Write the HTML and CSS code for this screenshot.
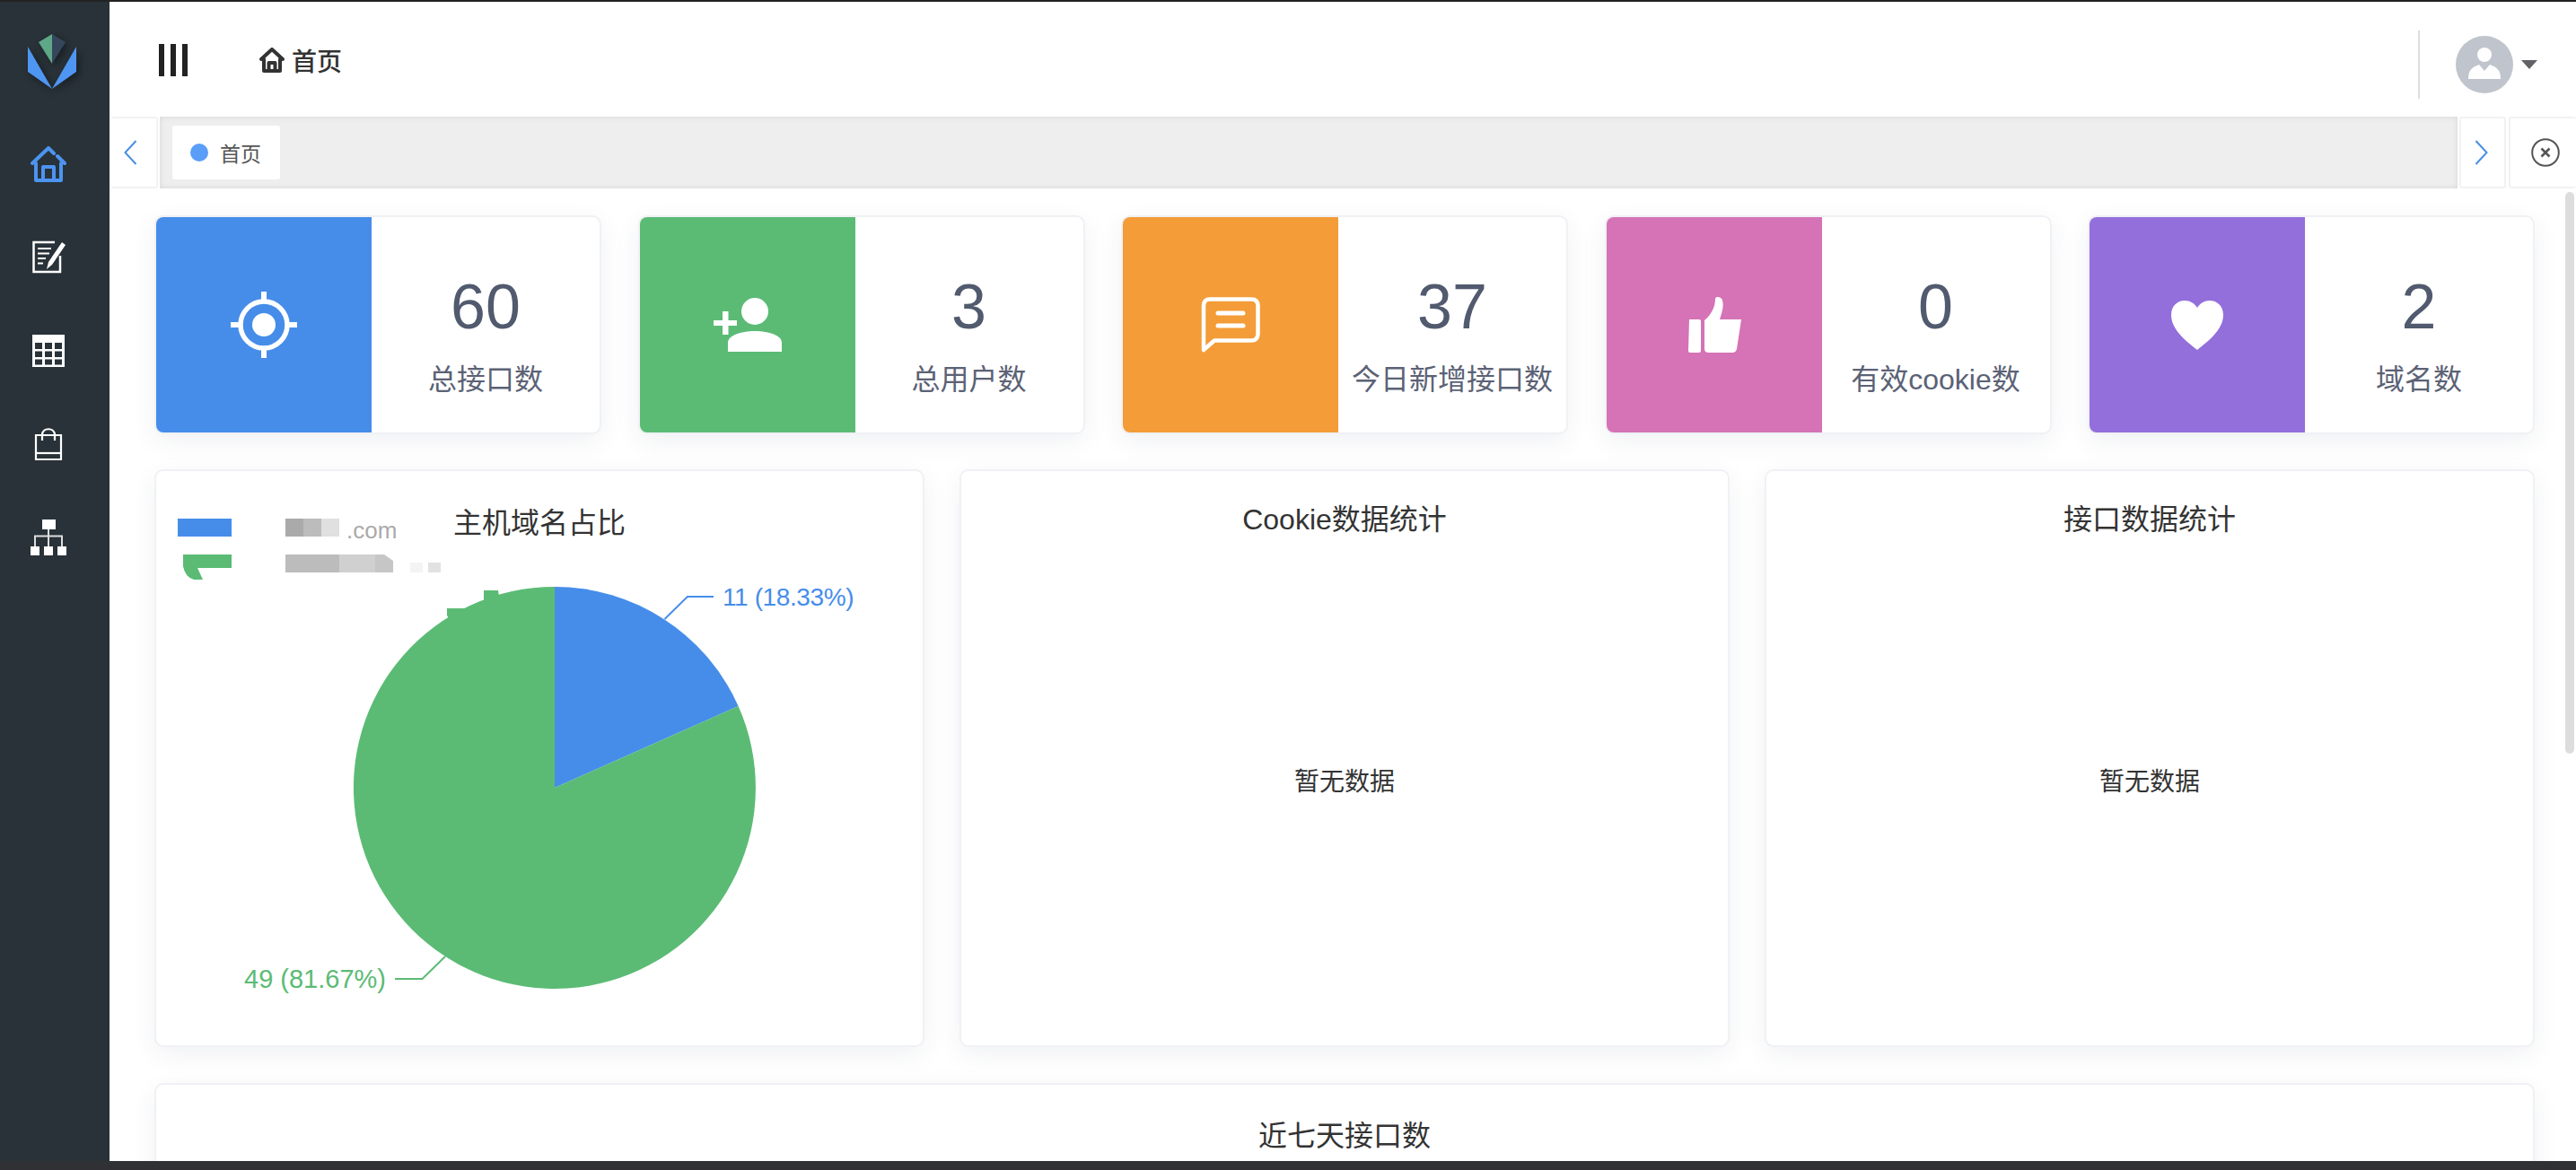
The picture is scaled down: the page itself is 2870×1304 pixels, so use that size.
FILE: index.html
```html
<!DOCTYPE html>
<html lang="zh-CN">
<head>
    <meta charset="UTF-8">
    <title>首页</title>
    <link rel="stylesheet" href="styles.css">
</head>
<body>
    <div class="app">
        <aside class="sidebar">
            <div class="logo">
                <svg width="54" height="62" viewBox="0 0 54 62">
                    <path d="M0 14 L27 61 L0 42 Z" fill="#4f96f2"/>
                    <path d="M54 14 L27 61 L54 42 Z" fill="#4f96f2"/>
                    <path d="M12 9 L27 0 L27 33 Z" fill="#5ea888"/>
                    <path d="M42 9 L27 0 L27 33 Z" fill="#35465c"/>
                </svg>
            </div>
            <nav class="menu">
                <div class="menu-item active">
                    <svg width="40" height="40" viewBox="0 0 40 40" fill="none" stroke="#4d94f0" stroke-width="4" stroke-linejoin="round" stroke-linecap="round">
                        <path d="M2 19 L20 2 L26 8 M30 11 L38 19"/>
                        <path d="M6 19 V38 H34 V19"/>
                        <path d="M14 38 V23 H26 V38"/>
                    </svg>
                </div>
                <div class="menu-item">
                    <svg width="40" height="40" viewBox="0 0 40 40" fill="none" stroke="#fff">
                        <path d="M27 3 H3.500 V36 H33 V18" stroke-width="2.500"/>
                        <path d="M8 10 H23 M8 15.500 H21 M8 21 H17 M8 26.500 H14" stroke-width="2.200"/>
                        <path d="M35 3 L39 6 L24 28 L18 33 L20 25 Z" fill="#fff" stroke="none"/>
                    </svg>
                </div>
                <div class="menu-item">
                    <svg width="40" height="40" viewBox="0 0 40 40" fill="none">
                        <rect x="2" y="2" width="36" height="36" fill="#fff"/>
                        <path d="M5 11 H13 V18 H5 Z M16 11 H24 V18 H16 Z M27 11 H35 V18 H27 Z M5 20.500 H13 V27 H5 Z M16 20.500 H24 V27 H16 Z M27 20.500 H35 V27 H27 Z M5 29.500 H13 V35.500 H5 Z M16 29.500 H24 V35.500 H16 Z M27 29.500 H35 V35.500 H27 Z" fill="#283238"/>
                    </svg>
                </div>
                <div class="menu-item">
                    <svg width="40" height="40" viewBox="0 0 40 40" fill="none" stroke="#fff" stroke-width="2.200">
                        <path d="M6 10 H34 V37 H6 Z"/>
                        <path d="M6 30 H34"/>
                        <path d="M13 16 V10 C13 1 27 1 27 10 V16"/>
                    </svg>
                </div>
                <div class="menu-item">
                    <svg width="40" height="40" viewBox="0 0 40 40" fill="none">
                        <rect x="13" y="0" width="15" height="11" fill="#fff"/>
                        <rect x="0" y="30" width="10" height="10" fill="#fff"/>
                        <rect x="15" y="30" width="10" height="10" fill="#fff"/>
                        <rect x="30" y="30" width="10" height="10" fill="#fff"/>
                        <path d="M20 11 V30 M5 30 V18.500 H35 V30" stroke="#ddd" stroke-width="2"/>
                    </svg>
                </div>
            </nav>
        </aside>

        <div class="main">
            <header class="header">
                <div class="hamburger"><i></i><i></i><i></i></div>
                <div class="crumb">
                    <svg width="28" height="28" viewBox="0 0 28 28" fill="none" stroke="#333" stroke-width="4" stroke-linejoin="round" stroke-linecap="round">
                        <path d="M2 13 L14 2 L26 13"/>
                        <path d="M5 13 V26 H23 V13"/>
                        <path d="M10.500 26 V17 H17.500 V26"/>
                    </svg>
                    <span>首页</span>
                </div>
                <div class="user">
                    <div class="avatar">
                        <svg width="64" height="64" viewBox="0 0 64 64">
                            <circle cx="32" cy="21" r="8" fill="#fff"/>
                            <path d="M14 48 C14 38 18 35 26 32 L32 39 L38 32 C46 35 50 38 50 48 Z" fill="#fff"/>
                        </svg>
                    </div>
                    <div class="caret"></div>
                </div>
            </header>

            <div class="tabs">
                <div class="tab-btn tab-prev">
                    <svg width="15" height="28" viewBox="0 0 15 28" fill="none" stroke="#4a90e2" stroke-width="2"><path d="M13.500 1 L1.500 14 L13.500 27"/></svg>
                </div>
                <div class="tab-track">
                    <div class="tab"><span class="tab-dot"></span>首页</div>
                </div>
                <div class="tab-btn tab-next">
                    <svg width="15" height="28" viewBox="0 0 15 28" fill="none" stroke="#4a90e2" stroke-width="2"><path d="M1.500 1 L13.500 14 L1.500 27"/></svg>
                </div>
                <div class="tab-btn tab-close">
                    <svg width="32" height="32" viewBox="0 0 32 32" fill="none" stroke="#555">
                        <circle cx="16" cy="16" r="14.800" stroke-width="2"/>
                        <path d="M11.500 11.500 L20.500 20.500 M20.500 11.500 L11.500 20.500" stroke-width="2.600"/>
                    </svg>
                </div>
            </div>

            <div class="content">
                <section class="stats">
                    <div class="stat">
                        <div class="stat-icon blue">
                            <svg width="74" height="74" viewBox="0 0 74 74" fill="none" stroke="#fff">
                                <circle cx="37" cy="37" r="26" stroke-width="5.500"/>
                                <circle cx="37" cy="37" r="13" fill="#fff" stroke="none"/>
                                <path d="M37 0 V11 M37 63 V74 M0 37 H11 M63 37 H74" stroke-width="6"/>
                            </svg>
                        </div>
                        <div class="stat-body">
                            <div class="stat-num">60</div>
                            <div class="stat-label">总接口数</div>
                        </div>
                    </div>
                    <div class="stat">
                        <div class="stat-icon green">
                            <svg width="76" height="60" viewBox="0 0 76 60" fill="#fff">
                                <circle cx="46" cy="15" r="15"/>
                                <path d="M16 60 V50 C16 42 30 37 46 37 C62 37 76 42 76 50 V60 Z"/>
                                <path d="M10 15 H16.500 V25 H26 V31 H16.500 V41 H10 V31 H0 V25 H10 Z"/>
                            </svg>
                        </div>
                        <div class="stat-body">
                            <div class="stat-num">3</div>
                            <div class="stat-label">总用户数</div>
                        </div>
                    </div>
                    <div class="stat">
                        <div class="stat-icon orange">
                            <svg width="66" height="62" viewBox="0 0 66 62" fill="none" stroke="#fff" stroke-width="4.500" stroke-linecap="round" stroke-linejoin="round">
                                <path d="M10 2.500 H56 Q63.500 2.500 63.500 10 V41 Q63.500 48.500 56 48.500 H15 L3 59 V10 Q3 2.500 10 2.500 Z"/>
                                <path d="M19 18 H47 M19 32 H47" stroke-width="5"/>
                            </svg>
                        </div>
                        <div class="stat-body">
                            <div class="stat-num">37</div>
                            <div class="stat-label">今日新增接口数</div>
                        </div>
                    </div>
                    <div class="stat">
                        <div class="stat-icon pink">
                            <svg width="60" height="62" viewBox="0 0 60 62" fill="#fff">
                                <path d="M2 25 H13 Q15 25 15 27 V60 Q15 62 13 62 H3 Q1 62 1 60 Z"/>
                                <path d="M19 26 C26 20 31 12 31 2 C31 -1 38 -1 39 4 C41 11 38 18 36 25 H60 L55 58 Q54 62 50 62 H24 Q19 62 19 58 Z"/>
                            </svg>
                        </div>
                        <div class="stat-body">
                            <div class="stat-num">0</div>
                            <div class="stat-label">有效cookie数</div>
                        </div>
                    </div>
                    <div class="stat">
                        <div class="stat-icon purple">
                            <svg width="58" height="55" viewBox="0 0 58 55" fill="#fff">
                                <path d="M29 55 C18 46 0 33 0 16 C0 6 7 0 15 0 C21 0 26 3 29 8 C32 3 37 0 43 0 C51 0 58 6 58 16 C58 33 40 46 29 55 Z"/>
                            </svg>
                        </div>
                        <div class="stat-body">
                            <div class="stat-num">2</div>
                            <div class="stat-label">域名数</div>
                        </div>
                    </div>
                </section>

                <section class="charts">
                    <div class="card chart-card">
                        <svg class="pie" viewBox="0 0 854 640" width="854" height="640">
                            <rect x="24" y="53" width="60" height="20" fill="#468dea"/>
                            <path d="M30 93 H84 V108 H46 L52 121 H42 Q32 118 30 106 Z" fill="#5bbb75"/>
                            <rect x="144" y="53" width="20" height="20" fill="#aaa"/>
                            <rect x="164" y="53" width="20" height="20" fill="#bcbcbc"/>
                            <rect x="184" y="53" width="20" height="20" fill="#e0e0e0"/>
                            <text class="legend-text" x="212" y="75">.com</text>
                            <rect x="144" y="93" width="60" height="20" fill="#bcbcbc"/>
                            <rect x="204" y="93" width="40" height="20" fill="#d0d0d0"/>
                            <path d="M244 93 H254 L264 100 V113 H244 Z" fill="#c6c6c6"/>
                            <rect x="283" y="102" width="14" height="11" fill="#f4f4f4"/>
                            <rect x="303" y="102" width="14" height="11" fill="#e2e2e2"/>

                            <path d="M444 353 L444 129 A224 224 0 0 1 648.600 262 Z" fill="#468dea"/>
                            <path d="M444 353 L648.600 262 A224 224 0 1 1 444 129 Z" fill="#5bbb75"/>
                            <path d="M365 133 H381 L382 140 V170 H330 L324 161 V153 H365 Z" fill="#5bbb75"/>

                            <path d="M566.500 165 L592 140 H621" fill="none" stroke="#468dea" stroke-width="2"/>
                            <text class="pie-label blue-text" x="631" y="150">11 (18.33%)</text>
                            <path d="M322 541 L296.500 566 H266" fill="none" stroke="#5bbb75" stroke-width="2"/>
                            <text class="pie-label green-text" x="256" y="576" text-anchor="end">49 (81.67%)</text>
                        </svg>
                        <h3 class="chart-title first">主机域名占比</h3>
                    </div>
                    <div class="card chart-card">
                        <h3 class="chart-title">Cookie数据统计</h3>
                        <div class="chart-empty">暂无数据</div>
                    </div>
                    <div class="card chart-card">
                        <h3 class="chart-title">接口数据统计</h3>
                        <div class="chart-empty">暂无数据</div>
                    </div>
                </section>

                <section class="card week-card">
                    <h3 class="chart-title">近七天接口数</h3>
                </section>
            </div>
            <div class="scrollbar"></div>
        </div>
    </div>
    <div class="dock"></div>
</body>
</html>
```

FILE: styles.css
```css
* {
    box-sizing: border-box;
}

html, body {
    margin: 0;
    padding: 0;
    height: 100%;
    overflow: hidden;
}

body {
    display: flex;
    flex-direction: column;
    border-top: 2px solid #222;
    background: #fff;
    font-family: "Liberation Sans", "Noto Sans CJK SC", sans-serif;
    color: #333;
}

.app {
    flex: 1;
    min-height: 0;
    display: flex;
}

.dock {
    height: 10px;
    background: #303135;
}

/* sidebar */
.sidebar {
    width: 122px;
    flex-shrink: 0;
    background: #283238;
}

.logo {
    height: 129px;
    padding: 36px 0 0 31px;
}

.logo svg {
    display: block;
    filter: drop-shadow(3px 3px 4px rgba(0, 0, 0, 0.4));
}

.menu-item {
    height: 104px;
    padding-left: 34px;
    display: flex;
    align-items: center;
}

/* header */
.main {
    flex: 1;
    min-width: 0;
    display: flex;
    flex-direction: column;
    position: relative;
}

.header {
    height: 128px;
    flex-shrink: 0;
    display: flex;
    align-items: center;
    padding: 2px 0 0 55px;
}

.hamburger {
    display: flex;
    gap: 7px;
    margin-right: 80px;
}

.hamburger i {
    display: block;
    width: 6px;
    height: 36px;
    background: #222;
}

.crumb {
    display: flex;
    align-items: center;
    gap: 8px;
    font-size: 28px;
    font-weight: 500;
    color: #333;
}

.user {
    margin-left: auto;
    margin-top: 10px;
    height: 76px;
    display: flex;
    align-items: center;
    border-left: 2px solid #ddd;
    padding-left: 40px;
    padding-right: 43px;
}

.avatar {
    width: 64px;
    height: 64px;
    border-radius: 50%;
    background: #c0c4cc;
}

.avatar svg {
    display: block;
}

.caret {
    margin-left: 9px;
    width: 0;
    height: 0;
    border-left: 9px solid transparent;
    border-right: 9px solid transparent;
    border-top: 10px solid #606266;
}

/* tabs */
.tabs {
    height: 80px;
    flex-shrink: 0;
    display: flex;
    align-items: stretch;
}

.tab-btn {
    flex-shrink: 0;
    display: flex;
    align-items: center;
    justify-content: center;
    background: #fff;
    border: 2px solid #f2f2f2;
    border-radius: 3px;
}

.tab-prev {
    width: 52px;
    margin: 0 2px;
    border-left: 0;
    padding-right: 7px;
}

.tab-next {
    width: 52px;
    margin-left: 2px;
    padding-right: 3px;
}

.tab-close {
    width: 75px;
    margin-left: 3px;
    border-right: 0;
    padding-left: 5px;
}

.tab-track {
    flex: 1;
    display: flex;
    align-items: center;
    padding-left: 14px;
    background: #eee;
    box-shadow: inset 0 0 6px rgba(0, 0, 0, 0.1);
}

.tab {
    width: 120px;
    height: 60px;
    display: flex;
    align-items: center;
    gap: 13px;
    padding-left: 20px;
    background: #fff;
    border-radius: 3px;
    font-size: 23px;
    color: #555;
}

.tab-dot {
    width: 20px;
    height: 20px;
    border-radius: 50%;
    background: #5a9ef8;
}

/* page content */
.content {
    flex: 1;
    min-height: 0;
    overflow: hidden;
    padding: 32px 48px 0 52px;
}

.stats {
    display: grid;
    grid-template-columns: repeat(5, 1fr);
    gap: 44.5px;
}

.card, .stat {
    background: #fff;
    border-radius: 8px;
    box-shadow: 0 0 0 2px #f0f1f5, 0 8px 30px rgba(40, 50, 90, 0.08);
}

.stat {
    height: 240px;
    display: flex;
    overflow: hidden;
}

.stat-icon {
    width: 240px;
    flex-shrink: 0;
    display: flex;
    align-items: center;
    justify-content: center;
}

.blue { background: #468dea; }
.green { background: #5bbb75; }
.orange { background: #f39c38; }
.pink { background: #d573b6; }
.purple { background: #936fdb; }

.stat-body {
    flex: 1;
    min-width: 0;
    text-align: center;
    padding-top: 60px;
    color: #515a6e;
    white-space: nowrap;
}

.stat-num {
    font-size: 70px;
    line-height: 80px;
}

.stat-label {
    margin-top: 20px;
    font-size: 32px;
    line-height: 42px;
    color: #5b6275;
}

.charts {
    margin-top: 43px;
    display: grid;
    grid-template-columns: repeat(3, 1fr);
    gap: 43px;
}

.chart-card {
    position: relative;
    height: 640px;
    display: flex;
    flex-direction: column;
}

.pie {
    position: absolute;
    left: 0;
    top: 0;
}

.legend-text {
    font-size: 26px;
    fill: #aaa;
}

.pie-label {
    font-size: 29px;
}

.blue-text {
    font-size: 28px;
    letter-spacing: -0.4px;
    fill: #468dea;
}

.green-text { fill: #5bbb75; }

.chart-title {
    position: relative;
    margin: 0;
    padding-top: 31px;
    font-size: 32px;
    line-height: 46px;
    font-weight: 400;
    text-align: center;
    color: #333;
}

.chart-title.first {
    padding-top: 35px;
}

.chart-empty {
    flex: 1;
    display: flex;
    align-items: center;
    justify-content: center;
    padding-bottom: 29px;
    font-size: 28px;
    color: #333;
}

.week-card {
    margin-top: 44px;
    height: 300px;
}

.week-card .chart-title {
    padding-top: 34px;
}

.scrollbar {
    position: absolute;
    right: 2px;
    top: 212px;
    width: 10px;
    height: 626px;
    border-radius: 5px;
    background: #ddd;
}
```
